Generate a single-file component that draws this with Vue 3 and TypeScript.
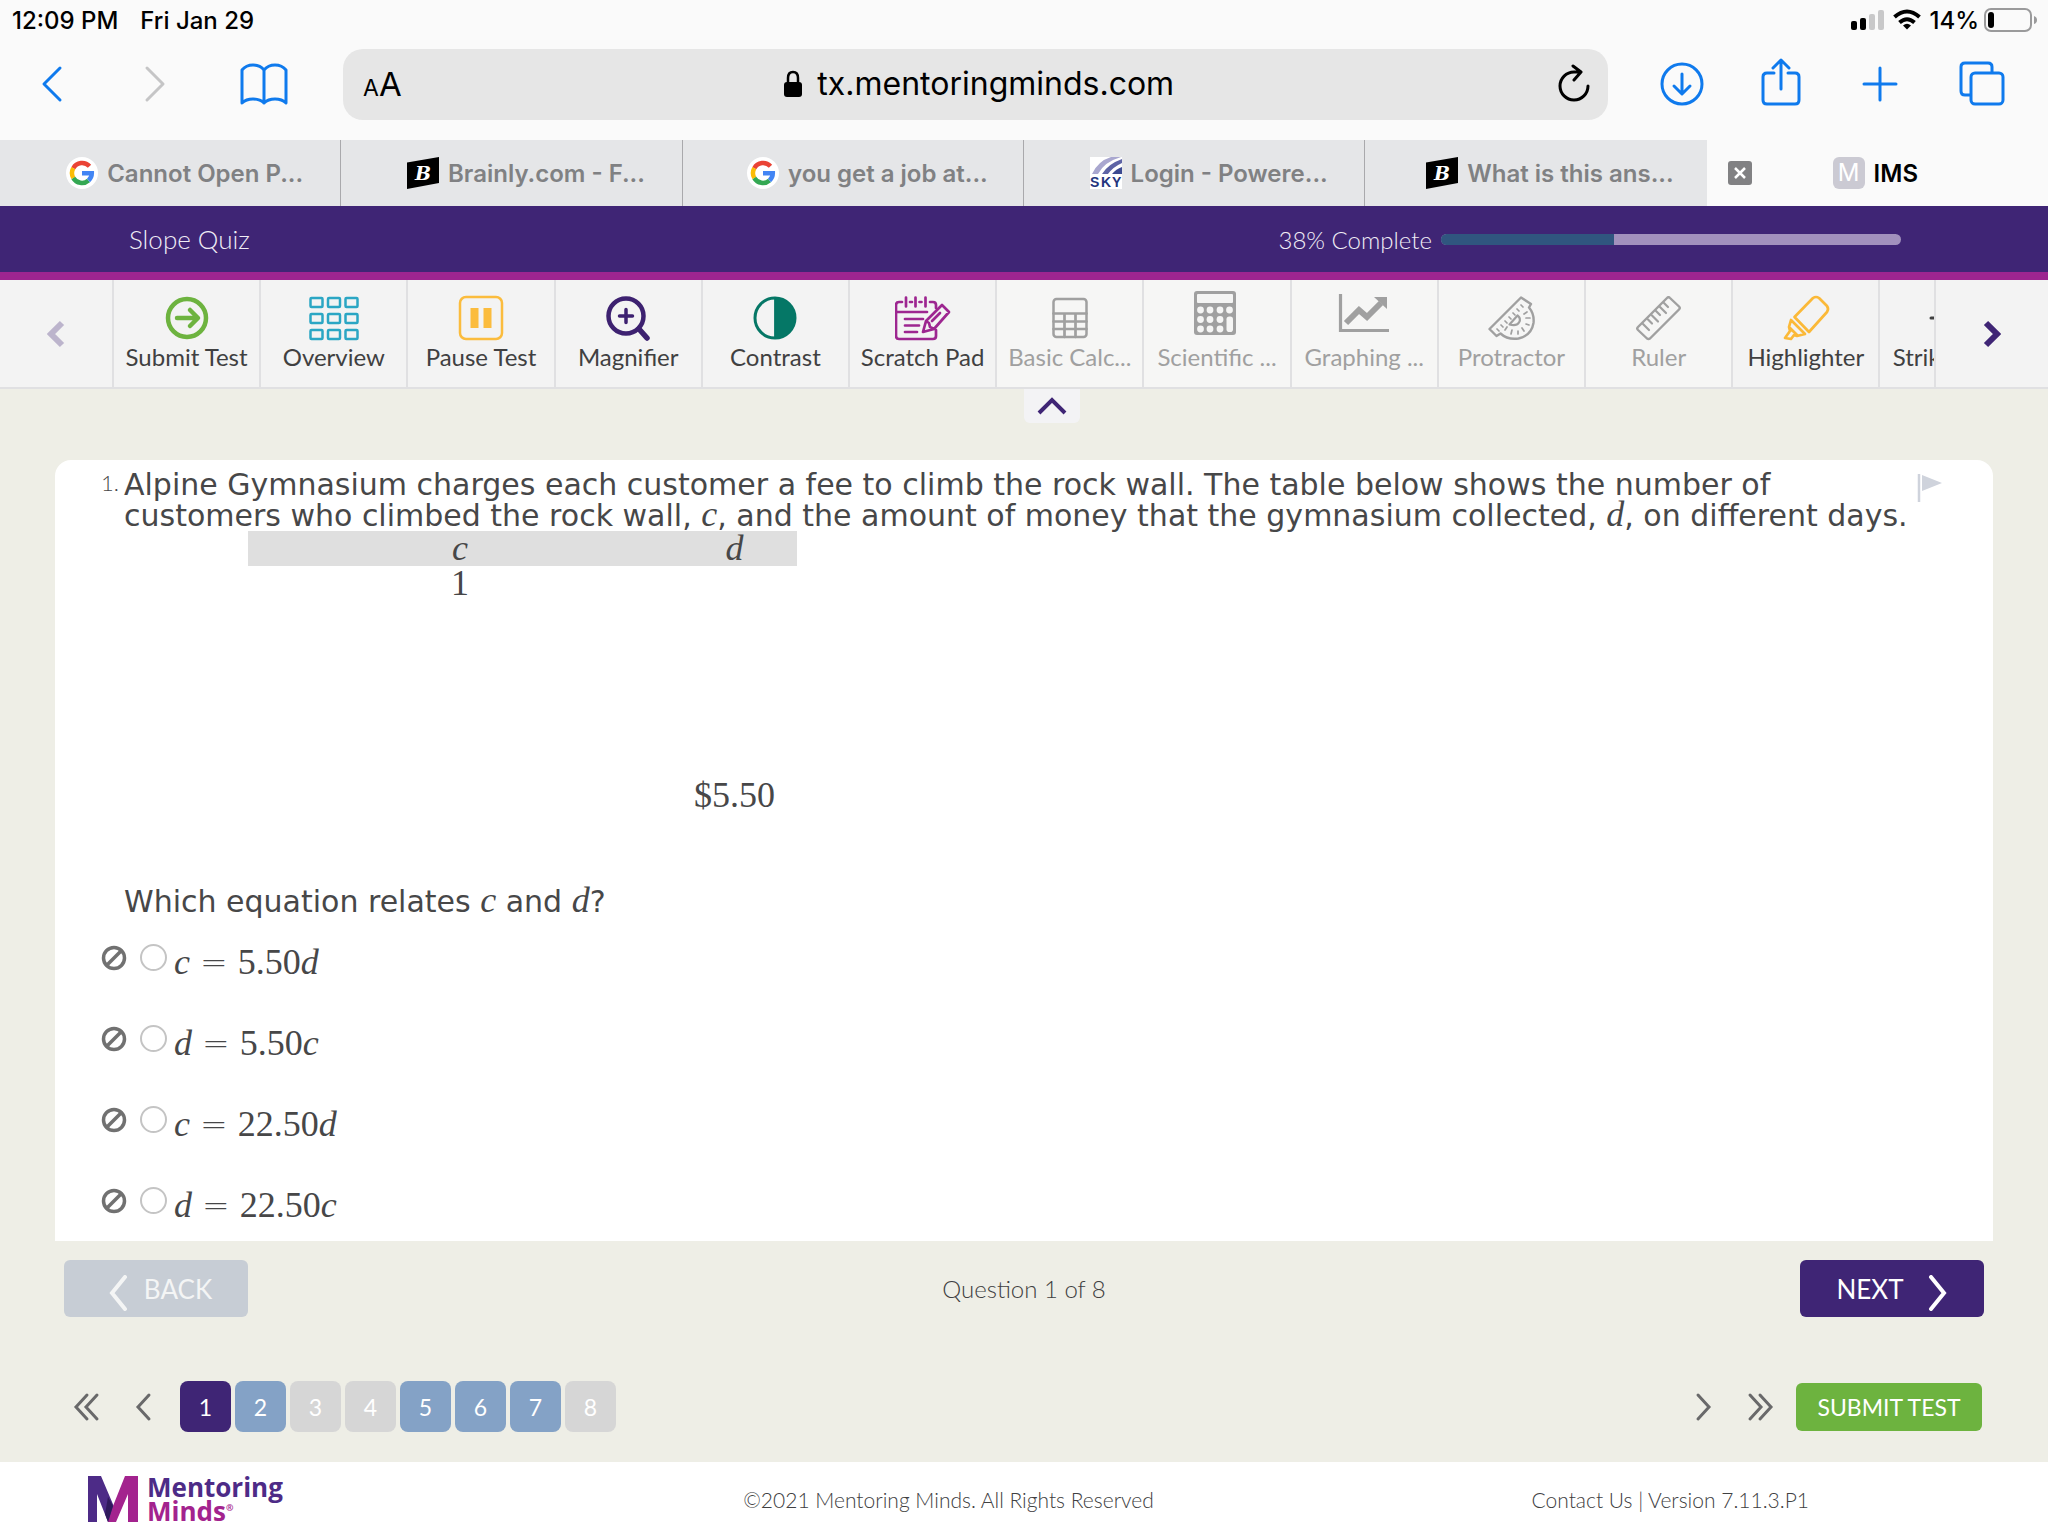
<script setup lang="ts">
import { ref } from 'vue'

interface BrowserTab {
  icon: 'google' | 'brainly' | 'sky'
  title: string
}

interface Tool {
  label: string
  disabled?: boolean
  color: string
  art: string
}

interface Term {
  text: string
  kind: 'variable' | 'equals' | 'factor'
}

const tabs: BrowserTab[] = [
  { icon: 'google', title: 'Cannot Open P...' },
  { icon: 'brainly', title: 'Brainly.com - F...' },
  { icon: 'google', title: 'you get a job at...' },
  { icon: 'sky', title: 'Login - Powere...' },
  { icon: 'brainly', title: 'What is this ans...' },
]

const grid = (xs: number[], ys: number[], cell: (x: number, y: number) => string): string =>
  ys.map((y) => xs.map((x) => cell(x, y)).join('')).join('')

const tools: Tool[] = [
  {
    label: 'Submit Test',
    color: '#6db33f',
    art: '<circle cx="28" cy="28" r="19" stroke-width="4.5"/><path d="M18 28h20M31 20l8 8-8 8" stroke-width="4.5"/>',
  },
  {
    label: 'Overview',
    color: '#2ba6c4',
    art: grid([4.5, 22, 39.5], [8, 24, 40], (x, y) => `<rect x="${x}" y="${y}" width="12" height="9" rx="1" stroke-width="2.5"/>`),
  },
  {
    label: 'Pause Test',
    color: '#fbbc3d',
    art: '<rect x="7" y="7" width="42" height="42" rx="6" stroke-width="2.5"/><path d="M21.5 18v20M34.5 18v20" stroke-width="8" stroke-linecap="butt"/>',
  },
  {
    label: 'Magnifier',
    color: '#3d2170',
    art: '<circle cx="26" cy="26" r="17.5" stroke-width="4.5"/><path d="M39 39l8 9" stroke-width="5.5"/><path d="M19.500 26h13M26 19.500v13" stroke-width="3.5"/>',
  },
  {
    label: 'Contrast',
    color: '#057766',
    art: '<circle cx="28" cy="28" r="20" stroke-width="3"/><path d="M28 8a20 20 0 0 1 0 40z" fill="currentColor" stroke-width="1"/>',
  },
  {
    label: 'Scratch Pad',
    color: '#9d2690',
    art: '<path d="M7 12H4q-3 0-3 3v31q0 3 3 3h34q3 0 3-3v-6M15 12h2M24.500 12h2M35 12h3q3 0 3 3v3M1 22h31M11 7.500v9M20.500 7.500v9M30.500 7.500v9M10 29h18M10 35.500h14M10 42h12" stroke-width="2.7"/><path d="M54 22l-7-7L31 31l-3 11 11-3 15-17zM31 31l3 2 1 4 4 2M37 31l8-8" stroke-width="2.7"/>',
  },
  {
    label: 'Basic Calc...',
    disabled: true,
    color: '#737373',
    art: '<rect x="11.500" y="9" width="33" height="38" rx="3" stroke-width="2.5"/><path d="M11.500 23.500h33M11.500 31.500h33M11.500 39h33M22.500 23.500V47M33.500 23.500V47" stroke-width="2.7"/>',
  },
  {
    label: 'Scientific ...',
    disabled: true,
    color: '#737373',
    art:
      '<rect x="5" y="1" width="42" height="44" rx="3" fill="currentColor" stroke="none"/><rect x="8" y="4" width="36" height="9" rx="1" fill="#f5f5f4" stroke="none"/>' +
      grid([11.5, 21, 31], [20, 29.5, 39], (x, y) => `<circle cx="${x}" cy="${y}" r="3.4" fill="#f5f5f4" stroke="none"/>`) +
      '<circle cx="40.500" cy="20" r="3.4" fill="#f5f5f4" stroke="none"/><rect x="37.500" y="26.500" width="6.500" height="15.500" rx="2.8" fill="#f5f5f4" stroke="none"/>',
  },
  {
    label: 'Graphing ...',
    disabled: true,
    color: '#737373',
    art: '<path d="M4.500 4v36.500H53" stroke-width="3.2" stroke-linecap="butt" stroke-linejoin="miter"/><path d="M10 33L23 20l8 7 14-14" stroke-width="6" stroke-linecap="butt" stroke-linejoin="miter"/><path d="M38 7h13v12z" fill="currentColor" stroke="none"/>',
  },
  {
    label: 'Protractor',
    disabled: true,
    color: '#737373',
    art: '<path d="M38 7.500L6.500 39l7 7 4-2.500q7 6.500 18 5 13-3 15-15.500 1-9-4.500-15.500L48 14z" stroke-width="2.4"/><path d="M26.500 34.500l8-9q4 3 1.500 7t-9.500 2z" stroke-width="2.2"/><path d="M38 15l2 2M34 19l2 2M30 23l2 2M26 27l2 2M22 31l2 2M18 35l2 2M14 39l2 2M44 22l-3 2M47 28h-4M46 35l-3-1M41 41l-2-3M35 44v-3M28 44l1-4M22 40l2-3" stroke-width="1.7"/>',
  },
  {
    label: 'Ruler',
    disabled: true,
    color: '#737373',
    art: '<path d="M36 8L7 37q-1.500 1.500 0 3l9 8.500q1.500 1 3 0l29-29q1.500-1.500 0-3L39 8q-1.500-1.500-3 0z" stroke-width="2.4"/><path d="M12 34l6 6M17 29.500l4 4M21 25.500l6 6M25 21l4 4M29 17l6 6M33 13l4 4" stroke-width="2.2"/>',
  },
  {
    label: 'Highlighter',
    color: '#fbb938',
    art: '<path d="M35 8L16.500 27l14.500 15L49 22q2-3 0-6l-8-8q-3-2-6 0z" stroke-width="2.7"/><path d="M13 30l14 14-8 2-3-1-3 4-6-1 5-7-1-4zM12 38l7 7" stroke-width="2.7"/>',
  },
  {
    label: 'Strikethro...',
    color: '#404041',
    art: '<path d="M6 28h44M40 14q-12-8-20 0t8 14q16 4 12 12t-24 0" stroke-width="3"/>',
  },
]

const equation = (left: string, factor: string, right: string): Term[] => [
  { text: left, kind: 'variable' },
  { text: '=', kind: 'equals' },
  { text: factor, kind: 'factor' },
  { text: right, kind: 'variable' },
]

const choices: Term[][] = [
  equation('c', '5.50', 'd'),
  equation('d', '5.50', 'c'),
  equation('c', '22.50', 'd'),
  equation('d', '22.50', 'c'),
]

const address = ref('tx.mentoringminds.com')
const picked = ref<number | null>(null)
const current = ref(1)
const answered = [2, 5, 6, 7]
const total = 8
const progress = 37.5

const pageState = (n: number): string =>
  n === current.value ? 'is-current' : answered.includes(n) ? 'is-answered' : ''
</script>

<template>
  <div class="screen">
    <header class="browser">
      <div class="status">
        <span>12:09 PM</span>
        <span class="date">Fri Jan 29</span>
        <svg class="signal" viewBox="0 0 34 22" width="34" height="22" aria-hidden="true">
          <rect x="0" y="12" width="6" height="9" rx="2" />
          <rect x="9" y="9" width="6" height="12" rx="2" />
          <rect x="18" y="5" width="6" height="16" rx="2" fill="#c8c8c9" />
          <rect x="27" y="1" width="6" height="20" rx="2" fill="#c8c8c9" />
        </svg>
        <svg class="wifi" viewBox="0 0 28 22" width="28" height="22" fill="none" stroke="#000" stroke-width="4" aria-hidden="true">
          <path d="M1.500 8q12.500-11 25 0M6.500 13.500q7.500-6.500 15 0" />
          <path d="M14 20.500l-4-4q4-3.500 8 0z" fill="#000" stroke="none" />
        </svg>
        <span>14%</span>
        <svg class="battery" viewBox="0 0 54 26" width="54" height="26" aria-hidden="true">
          <rect x="1" y="2" width="46" height="22" rx="6" fill="none" stroke="#9a9a9b" stroke-width="2" />
          <rect x="4" y="5" width="6" height="16" rx="3" />
          <path d="M50 9q3 1 3 4t-3 4z" fill="#9a9a9b" />
        </svg>
      </div>

      <div class="navbar">
        <button class="nav-btn back" aria-label="Back">
          <svg viewBox="0 0 24 40" width="24" height="40"><path d="M20 4L4 20l16 16" /></svg>
        </button>
        <button class="nav-btn forward" aria-label="Forward">
          <svg viewBox="0 0 24 40" width="24" height="40"><path d="M4 4l16 16L4 36" /></svg>
        </button>
        <button class="nav-btn book" aria-label="Bookmarks">
          <svg viewBox="0 0 50 44" width="50" height="44">
            <path d="M25 8Q21 3 14 3T3 8v33q4-4 11-4t11 4q4-4 11-4t11 4V8q-4-5-11-5T25 8zv33" />
          </svg>
        </button>
        <div class="address">
          <button class="reader" aria-label="Page settings"><small>A</small>A</button>
          <label class="site">
            <svg viewBox="0 0 18 28" width="18" height="28" aria-hidden="true">
              <path d="M4 13V8q0-6 5-6t5 6v5" fill="none" stroke="#000" stroke-width="2.500" />
              <rect x="0" y="12" width="18" height="15" rx="3" />
            </svg>
            <input v-model="address" type="text" aria-label="Address" />
          </label>
          <button class="reload" aria-label="Reload">
            <svg viewBox="0 0 34 40" width="34" height="40" fill="none" stroke="#000" stroke-width="3" stroke-linecap="round" stroke-linejoin="round">
              <path d="M32 22a14 14 0 1 1-14-14h6M17 2l8 6-7 8" />
            </svg>
          </button>
        </div>
        <div class="actions">
          <button class="nav-btn" aria-label="Downloads">
            <svg viewBox="0 0 48 52" width="48" height="52"><circle cx="24" cy="26" r="20" /><path d="M24 16v19M16 28l8 8 8-8" /></svg>
          </button>
          <button class="nav-btn" aria-label="Share">
            <svg viewBox="0 0 48 52" width="48" height="52"><path d="M16 15h-7q-4 0-4 4v23q0 4 4 4h28q4 0 4-4V19q0-4-4-4h-7M23 31V2M15 10l8-8 8 8" /></svg>
          </button>
          <button class="nav-btn" aria-label="New tab">
            <svg viewBox="0 0 48 52" width="48" height="52"><path d="M6 26h32M22 10v32" /></svg>
          </button>
          <button class="nav-btn" aria-label="Show tabs">
            <svg viewBox="0 0 48 52" width="48" height="52">
              <path d="M12 37H7q-4 0-4-4V9q0-4 4-4h23q4 0 4 4v5" /><rect x="13" y="15" width="32" height="31" rx="4" />
            </svg>
          </button>
        </div>
      </div>

      <nav class="tabs" aria-label="Open tabs">
        <button v-for="(tab, i) in tabs" :key="i" class="tab">
          <svg v-if="tab.icon === 'google'" viewBox="0 0 32 32" width="32" height="32" aria-hidden="true">
            <circle cx="16" cy="16" r="16" fill="#fff" />
            <g fill="none" stroke-width="4.500">
              <path d="M23.500 9.200A10 10 0 0 0 7.300 11.200" stroke="#ea4335" />
              <path d="M7.300 11.200a10 10 0 0 0 0 9.800" stroke="#fbbc05" />
              <path d="M7.300 21a10 10 0 0 0 15.200 2.500" stroke="#34a853" />
              <path d="M22.500 23.500q3.300-3 3.300-7.300H16" stroke="#4285f4" />
            </g>
          </svg>
          <svg v-else-if="tab.icon === 'brainly'" viewBox="0 0 32 32" width="32" height="32" aria-hidden="true">
            <path d="M0 5.500L32 0v26L0 32z" />
            <text x="16" y="23" text-anchor="middle" fill="#fff" font-family="DejaVu Serif, serif" font-weight="700" font-style="italic" font-size="19">B</text>
          </svg>
          <svg v-else viewBox="0 0 32 32" width="32" height="32" aria-hidden="true">
            <path d="M0 0h32v32H0z" fill="#fff" />
            <path d="M2 17Q8 4 21 0h10Q14 5 8 17z" fill="#a9a7cf" />
            <path d="M12 17Q18 7 32 2v4Q23 10 18 17z" fill="#5d63a5" />
            <path d="M22 17q4-5 10-7v7z" fill="#3c4a91" />
            <text y="30" fill="#24357e" font-family="Liberation Sans, sans-serif" font-weight="700" font-size="14"><tspan x="0">S</tspan><tspan x="11">K</tspan><tspan x="22">Y</tspan></text>
          </svg>
          <span>{{ tab.title }}</span>
        </button>
        <div class="tab active">
          <button class="close" aria-label="Close tab">
            <svg viewBox="0 0 24 24" width="24" height="24"><rect width="24" height="24" rx="3" fill="#818183" /><path d="M7 7l10 10M17 7L7 17" stroke="#fff" stroke-width="2.500" /></svg>
          </button>
          <span class="site-mark">M</span>
          <span>IMS</span>
        </div>
      </nav>
    </header>

    <section class="quiz-bar">
      <h1>Slope Quiz</h1>
      <div class="completion">
        <span>38% Complete</span>
        <div class="track" role="progressbar" :aria-valuenow="progress"><div class="fill" :style="{ width: progress + '%' }"></div></div>
      </div>
    </section>

    <section class="toolbar">
      <button class="pager prev" aria-label="Previous tools">
        <svg viewBox="0 0 18 28" width="18" height="28"><path d="M15 3L4 14l11 11" /></svg>
      </button>
      <div class="tool-strip">
        <button v-for="tool in tools" :key="tool.label" class="tool" :disabled="tool.disabled">
          <svg
            viewBox="0 0 56 56"
            width="56"
            height="56"
            fill="none"
            stroke="currentColor"
            stroke-linecap="round"
            stroke-linejoin="round"
            :style="{ color: tool.color }"
            aria-hidden="true"
            v-html="tool.art"
          ></svg>
          <span>{{ tool.label }}</span>
        </button>
      </div>
      <button class="pager next" aria-label="More tools">
        <svg viewBox="0 0 18 28" width="18" height="28"><path d="M3 3l11 11L3 25" /></svg>
      </button>
      <button class="collapse" aria-label="Collapse toolbar">
        <svg viewBox="0 0 32 20" width="32" height="20"><path d="M3 17L16 4l13 13" /></svg>
      </button>
    </section>

    <main class="work">
      <article class="card">
        <div class="question">
          <span class="ordinal">1.</span>
          <p>
            Alpine Gymnasium charges each customer a fee to climb the rock wall. The table below shows the number of
            customers who climbed the rock wall, <i>c</i>, and the amount of money that the gymnasium collected,
            <i>d</i>, on different days.
          </p>
          <button class="flag" aria-label="Flag question">
            <svg viewBox="0 0 26 30" width="26" height="30"><path d="M2 1v28" stroke="#cfd3dc" stroke-width="2.500" /><path d="M5 2l20 8L5 18z" fill="#cfd3dc" /></svg>
          </button>
        </div>
        <table class="data">
          <thead>
            <tr><th scope="col">c</th><th scope="col">d</th></tr>
          </thead>
          <tbody>
            <tr><td>1</td><td class="low">$5.50</td></tr>
          </tbody>
        </table>
        <p class="prompt">Which equation relates <i>c</i> and <i>d</i>?</p>
        <ul class="choices">
          <li v-for="(terms, i) in choices" :key="i">
            <button class="strike" aria-label="Eliminate choice">
              <svg viewBox="0 0 26 26" width="26" height="26" fill="none" stroke="#717171" stroke-width="3.500"><circle cx="13" cy="13" r="10.500" /><path d="M6 20L20 6" /></svg>
            </button>
            <input :id="'choice-' + i" v-model="picked" type="radio" name="choice" :value="i" />
            <label :for="'choice-' + i"><span v-for="(term, k) in terms" :key="k" :class="term.kind">{{ term.text }}</span></label>
          </li>
        </ul>
      </article>

      <div class="steps">
        <button class="step" disabled>
          <svg viewBox="0 0 20 36" width="20" height="36"><path d="M17 2L4 18l13 16" /></svg>
          <span>BACK</span>
        </button>
        <p>Question {{ current }} of {{ total }}</p>
        <button class="step forward-step">
          <span>NEXT</span>
          <svg viewBox="0 0 20 36" width="20" height="36"><path d="M3 2l13 16L3 34" /></svg>
        </button>
      </div>

      <div class="pages">
        <button class="jump first" aria-label="First page">
          <svg viewBox="0 0 28 30" width="28" height="30"><path d="M15 3L4 15l11 12M25 3L14 15l11 12" /></svg>
        </button>
        <button class="jump before" aria-label="Previous page">
          <svg viewBox="0 0 18 30" width="18" height="30"><path d="M15 3L4 15l11 12" /></svg>
        </button>
        <button v-for="n in total" :key="n" class="page" :class="pageState(n)" @click="current = n">{{ n }}</button>
        <button class="jump after" aria-label="Next page">
          <svg viewBox="0 0 18 30" width="18" height="30"><path d="M3 3l11 12L3 27" /></svg>
        </button>
        <button class="jump last" aria-label="Last page">
          <svg viewBox="0 0 28 30" width="28" height="30"><path d="M3 3l11 12L3 27M13 3l11 12-11 12" /></svg>
        </button>
        <button class="submit">SUBMIT TEST</button>
      </div>
    </main>

    <footer class="footer">
      <a class="brand" href="#">
        <svg viewBox="0 0 50 46" width="50" height="46" aria-hidden="true">
          <path d="M0 46V0h13l14 33-5 13h-2L9 18v28z" fill="#4d2b87" />
          <path d="M50 46V0H37L25 30l-5 16h8L40 18v28z" fill="#a3238e" />
          <path d="M20 46l5-16-5-9-3 17z" fill="#2f1a5c" />
        </svg>
        <span class="brand-name"><span>Mentoring</span><span class="minds">Minds<sup>®</sup></span></span>
      </a>
      <p>©2021 Mentoring Minds. All Rights Reserved</p>
      <p class="contact"><a href="#">Contact Us</a> | Version 7.11.3.P1</p>
    </footer>
  </div>
</template>

<style>
body {
  margin: 0;
  background: #eeeee6;
}
</style>

<style scoped>
.screen {
  display: flex;
  flex-direction: column;
  min-height: 100vh;
  color: #404041;
  font-family: Lato, sans-serif;
  font-size: 22px;
}
p,
h1,
ul {
  margin: 0;
  padding: 0;
  list-style: none;
}
button {
  display: flex;
  align-items: center;
  justify-content: center;
  margin: 0;
  padding: 0;
  border: 0;
  background: none;
  color: inherit;
  font: inherit;
}
svg {
  display: block;
  flex: none;
}

/* Browser chrome */
.browser {
  background: #fafafa;
  color: #000;
  font-family: Inter, sans-serif;
}
.status {
  display: flex;
  align-items: center;
  height: 40px;
  padding: 0 10px 0 12px;
  font-size: 24px;
  font-weight: 500;
}
.date {
  margin: 0 auto 0 22px;
}
.wifi {
  margin: 0 8px;
}
.battery {
  margin-left: 5px;
}
.navbar {
  display: flex;
  align-items: center;
  height: 88px;
  padding: 0 42px 12px 40px;
}
.nav-btn svg {
  fill: none;
  stroke: #0f7aed;
  stroke-width: 3;
  stroke-linecap: round;
  stroke-linejoin: round;
}
.forward {
  margin-left: 79px;
}
.forward svg {
  stroke: #c5c5c6;
}
.book {
  margin-left: 72px;
}
.address {
  display: flex;
  flex: 1;
  align-items: center;
  justify-content: space-between;
  height: 71px;
  margin: 0 50px 0 54px;
  padding: 0 18px 0 20px;
  border-radius: 20px;
  background: #e6e6e6;
}
.reader {
  align-items: baseline;
  font-size: 33px;
}
.reader small {
  font-size: 23px;
}
.site {
  display: flex;
  align-items: center;
  gap: 15px;
  margin-left: 12px;
}
.site input {
  width: 368px;
  padding: 0;
  border: 0;
  outline: 0;
  background: none;
  color: #000;
  font: 32px/40px Inter, sans-serif;
}
.actions {
  display: flex;
  gap: 52px;
}
.tabs {
  display: grid;
  grid-template-columns: repeat(6, minmax(0, 1fr));
  height: 66px;
}
.tab {
  display: flex;
  align-items: center;
  justify-content: center;
  gap: 9px;
  box-sizing: border-box;
  padding-left: 29px;
  border-right: 1px solid #a9a9ac;
  background: #e5e6e8;
  color: #808183;
  font-size: 24px;
  font-weight: 600;
  white-space: nowrap;
}
.tab:nth-child(5) {
  border-color: #e5e6e8;
}
.tab.active {
  padding: 0 130px 0 21px;
  border: 0;
  background: #fafafa;
  color: #000;
}
.close {
  margin-right: auto;
}
.site-mark {
  width: 32px;
  border-radius: 6px;
  background: #cbcad3;
  color: #fff;
  font-weight: 400;
  line-height: 32px;
  text-align: center;
}

/* Quiz heading */
.quiz-bar {
  display: flex;
  align-items: center;
  justify-content: space-between;
  height: 66px;
  padding: 0 147px 0 129px;
  border-bottom: 8px solid #9d2590;
  background: #3f2575;
  color: #f0edf5;
  font-weight: 300;
}
.quiz-bar h1 {
  font-size: 26px;
  font-weight: 300;
}
.completion {
  display: flex;
  align-items: center;
  gap: 9px;
  font-size: 24px;
}
.track {
  overflow: hidden;
  width: 460px;
  height: 11px;
  border-radius: 6px;
  background: #a291bd;
}
.fill {
  height: 100%;
  background: #30567f;
}

/* Tool strip */
.toolbar {
  position: relative;
  display: flex;
  height: 107px;
  border-bottom: 2px solid #e0e0e2;
  background: #f3f3f3;
}
.pager {
  flex: none;
  width: 112px;
}
.pager svg {
  fill: none;
  stroke: #3f2575;
  stroke-width: 6;
}
.prev svg {
  opacity: 0.3;
}
.tool-strip {
  display: flex;
  flex: 1;
  overflow: hidden;
  min-width: 0;
  border-right: 2px solid #e0e0e2;
}
.tool {
  flex: 0 0 8.08%;
  flex-direction: column;
  justify-content: flex-start;
  box-sizing: border-box;
  padding-top: 10px;
  border-left: 2px solid #e0e0e2;
  font-size: 24px;
  line-height: 22px;
  white-space: nowrap;
}
.tool:disabled {
  background: #f6f6f5;
  color: #a0a0a0;
}
.tool:disabled svg {
  opacity: 0.65;
}
.collapse {
  position: absolute;
  top: 109px;
  left: 50%;
  width: 56px;
  height: 34px;
  border-radius: 0 0 6px 6px;
  background: #f3f3f5;
}
.collapse svg {
  fill: none;
  stroke: #3f2575;
  stroke-width: 4;
}

/* Question */
.work {
  flex: 1;
  padding: 71px 55px 28px;
  background: #eeeee6;
}
.card {
  padding: 9px 50px 0 46px;
  border-radius: 16px 16px 0 0;
  background: #fff;
  color: #474748;
}
.question {
  display: flex;
  align-items: flex-start;
}
.ordinal {
  width: 23px;
  font-size: 22px;
  font-weight: 300;
  line-height: 28px;
}
.question p {
  flex: 1;
}
.question p,
.prompt {
  font: 30px/31px "DejaVu Sans", sans-serif;
}
.question i,
.prompt i {
  font: italic 36px/1px "Liberation Serif", serif;
}
.flag {
  margin-top: 4px;
}
.data {
  margin-left: 147px;
  border-collapse: collapse;
  font: 36px/35px "Liberation Serif", serif;
  text-align: center;
}
.data th {
  width: 424px;
  padding: 0;
  background: #dfdfdf;
  font-style: italic;
  font-weight: 400;
}
.data th + th {
  width: 125px;
}
.data td {
  height: 247px;
  padding: 0;
  vertical-align: top;
}
.data td.low {
  vertical-align: bottom;
}
.prompt {
  margin: 73px 0 0 23px;
}
.choices li {
  display: flex;
  align-items: center;
  height: 81px;
}
.choices input {
  width: 27px;
  height: 27px;
  margin: 0 7px 0 13px;
  border: 2px solid #c4c4c4;
  border-radius: 50%;
  appearance: none;
  background: #fff;
}
.choices input:checked {
  background: #3f2575;
}
.choices label {
  padding-top: 8px;
  font: 36px/40px "Liberation Serif", serif;
}
.variable {
  font-style: italic;
}
.equals {
  margin: 0 10px;
  font: 200 33px/1px "DejaVu Sans", sans-serif;
}

/* Step and page controls */
.steps {
  display: flex;
  align-items: center;
  justify-content: space-between;
  padding: 19px 9px 0;
  font-size: 24px;
  font-weight: 300;
}
.step {
  gap: 16px;
  box-sizing: border-box;
  width: 184px;
  height: 57px;
  border-radius: 6px;
  background: #3f2575;
  color: #fff;
  font-size: 26px;
  font-weight: 400;
}
.step:disabled {
  padding-left: 8px;
  background: #c7cdd5;
  color: #f4f5f5;
}
.step svg {
  margin-top: 8px;
  fill: none;
  stroke: currentColor;
  stroke-width: 4;
  stroke-linecap: round;
}
.forward-step {
  gap: 24px;
}
.pages {
  display: flex;
  align-items: center;
  gap: 4px;
  padding: 64px 11px 0 17px;
}
.jump svg {
  fill: none;
  stroke: #69696a;
  stroke-width: 3;
  stroke-linecap: round;
}
.before {
  margin: 0 24px 0 30px;
}
.page {
  width: 51px;
  height: 51px;
  border-radius: 8px;
  background: #d6d6d6;
  color: #fff;
  font-size: 23px;
}
.page.is-answered {
  background: #84a2c6;
}
.page.is-current {
  background: #3f2575;
}
.after {
  margin-left: auto;
}
.last {
  margin: 0 17px 0 30px;
}
.submit {
  width: 186px;
  height: 48px;
  border-radius: 6px;
  background: #6db33f;
  color: #fff;
  font-size: 23px;
}

/* Footer */
.footer {
  display: grid;
  grid-template-columns: 35% auto 1fr;
  align-items: center;
  height: 74px;
  padding: 0 88px;
  background: #fff;
  font-size: 21px;
  font-weight: 300;
}
.footer a {
  color: inherit;
  text-decoration: none;
}
.brand {
  display: flex;
  align-items: center;
  gap: 9px;
}
.brand-name {
  display: flex;
  flex-direction: column;
  color: #4d2b87;
  font: 700 26px/24px "Open Sans", sans-serif;
}
.footer .minds {
  color: #a3238e;
}
.brand-name sup {
  font-size: 9px;
  line-height: 1px;
}
.contact {
  justify-self: end;
  padding-right: 151px;
}
</style>
